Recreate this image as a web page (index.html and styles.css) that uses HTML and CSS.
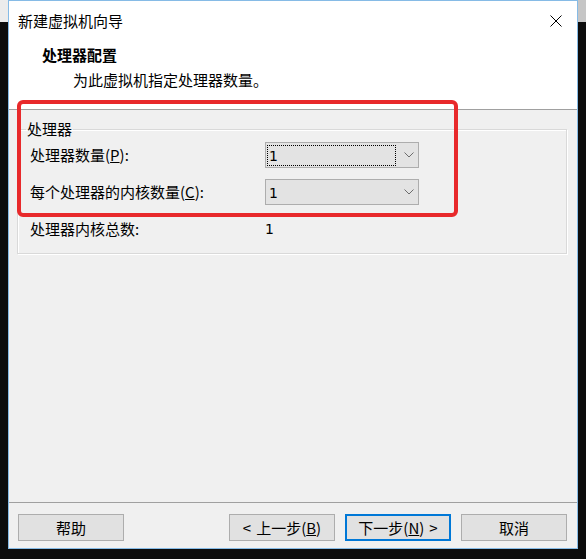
FILE: index.html
```html
<!DOCTYPE html>
<html lang="zh-CN">
<head>
<meta charset="utf-8">
<title>新建虚拟机向导</title>
<link rel="stylesheet" href="styles.css">
</head>
<body>
<div class="window">
  <div class="titlebar">
    <span class="title">新建虚拟机向导</span>
    <svg class="close" width="12" height="12" viewBox="0 0 12 12"><path d="M0.5 0.5 L11.5 11.5 M11.5 0.5 L0.5 11.5" stroke="#000" stroke-width="1" fill="none"/></svg>
  </div>
  <div class="header">
    <div class="h-title">处理器配置</div>
    <div class="h-sub">为此虚拟机指定处理器数量。</div>
  </div>
  <div class="content">
    <fieldset class="group">
      <legend>处理器</legend>
      <div class="row r1">
        <span class="label">处理器数量(<u>P</u>):</span>
        <div class="combo">
          <span class="value focus">1</span>
          <svg class="chev" width="10" height="6" viewBox="0 0 10 6"><polyline points="0.5,0.5 5,5 9.5,0.5" fill="none" stroke="#6d6d6d" stroke-width="1"/></svg>
        </div>
      </div>
      <div class="row r2">
        <span class="label">每个处理器的内核数量(<u>C</u>):</span>
        <div class="combo">
          <span class="value">1</span>
          <svg class="chev" width="10" height="6" viewBox="0 0 10 6"><polyline points="0.5,0.5 5,5 9.5,0.5" fill="none" stroke="#6d6d6d" stroke-width="1"/></svg>
        </div>
      </div>
      <div class="row r3">
        <span class="label">处理器内核总数:</span>
        <span class="total">1</span>
      </div>
    </fieldset>
  </div>
  <div class="footer">
    <button class="btn">帮助</button>
    <div class="spacer"></div>
    <button class="btn"><span class="arr-l">&lt;</span>上一步(<u>B</u>)</button>
    <button class="btn default">下一步(<u>N</u>)<span class="arr-r">&gt;</span></button>
    <button class="btn">取消</button>
  </div>
  <div class="mark"></div>
</div>
</body>
</html>
```
FILE: styles.css
```css
html, body {
  margin: 0;
  padding: 0;
}
body {
  width: 586px;
  height: 559px;
  overflow: hidden;
  background:
    linear-gradient(#ececec, #ececec) left top / 8px 22px no-repeat,
    linear-gradient(#c6c6c6, #c6c6c6) right top / 9px 22px no-repeat,
    #0c0c0c;
  font-family: "Noto Sans CJK SC", "Noto Sans", sans-serif;
  font-size: 15px;
  color: #000;
}
.window {
  position: relative;
  margin-left: 8px;
  width: 570px;
  height: 549px;
  box-sizing: border-box;
  border: 1px solid #86bbe6;
  background: #f0f0f0;
  display: flex;
  flex-direction: column;
}
.titlebar {
  height: 40px;
  background: #fff;
  display: flex;
  align-items: center;
  justify-content: space-between;
  padding: 0 15px 0 9px;
  line-height: 20px;
}
.close {
  display: block;
  margin-top: -1px;
}
.header {
  background: #fff;
  height: 69px;
  padding-top: 4px;
  box-sizing: border-box;
  border-bottom: 1px solid #a0a0a0;
  line-height: 20px;
}
.h-title {
  padding-left: 33px;
  font-weight: bold;
  height: 20px;
}
.h-sub {
  padding-left: 64px;
  height: 20px;
  margin-top: 5px;
}
.content {
  flex: 1;
  padding: 9px 10px 0 8px;
}
.group {
  margin: 0;
  padding: 3px 0 14px 12px;
  border: 1px solid #d9d9d9;
  box-shadow: 1px 1px 0 #fff, inset 1px 1px 0 #fff;
}
.group legend {
  margin-left: -4px;
  padding: 0 1px;
  line-height: 20px;
  height: 20px;
}
.row {
  display: flex;
  align-items: center;
}
.label {
  width: 235px;
  line-height: 20px;
}
.r1, .r2 {
  height: 26px;
}
.r2 {
  margin-top: 11px;
}
.r3 {
  height: 20px;
  margin-top: 14px;
}
.combo {
  width: 154px;
  height: 26px;
  box-sizing: border-box;
  border: 1px solid #adadad;
  background: #e3e3e3;
  display: flex;
  align-items: center;
  padding-left: 1px;
}
.value {
  font-family: "DejaVu Sans", sans-serif;
  font-size: 14px;
  width: 129px;
  height: 21px;
  box-sizing: border-box;
  line-height: 21px;
  padding-left: 1px;
  border: 1px solid transparent;
}
.value.focus {
  border: 1px dotted #000;
}
.chev {
  display: block;
  margin-left: 8px;
}
.total {
  font-family: "DejaVu Sans", sans-serif;
  font-size: 14px;
  line-height: 20px;
}
.footer {
  height: 46px;
  box-sizing: border-box;
  border-top: 1px solid #a0a0a0;
  display: flex;
  align-items: flex-start;
  gap: 10px;
  padding: 11px 10px 0 9px;
}
.spacer {
  flex: 1;
}
.btn {
  width: 106px;
  height: 27px;
  box-sizing: border-box;
  border: 1px solid #adadad;
  background: #e1e1e1;
  font-family: "Noto Sans CJK SC", "Noto Sans", sans-serif;
  font-size: 15px;
  line-height: 20px;
  color: #000;
  padding: 0;
  margin: 0;
}
.btn.default {
  border: 2px solid #0078d7;
}
.arr-l {
  margin-right: 5px;
}
.arr-r {
  margin-left: 5px;
}
.mark {
  position: absolute;
  left: 8px;
  top: 99px;
  width: 441px;
  height: 117px;
  box-sizing: border-box;
  border: 4px solid #e8292b;
  border-radius: 6px;
}
```
